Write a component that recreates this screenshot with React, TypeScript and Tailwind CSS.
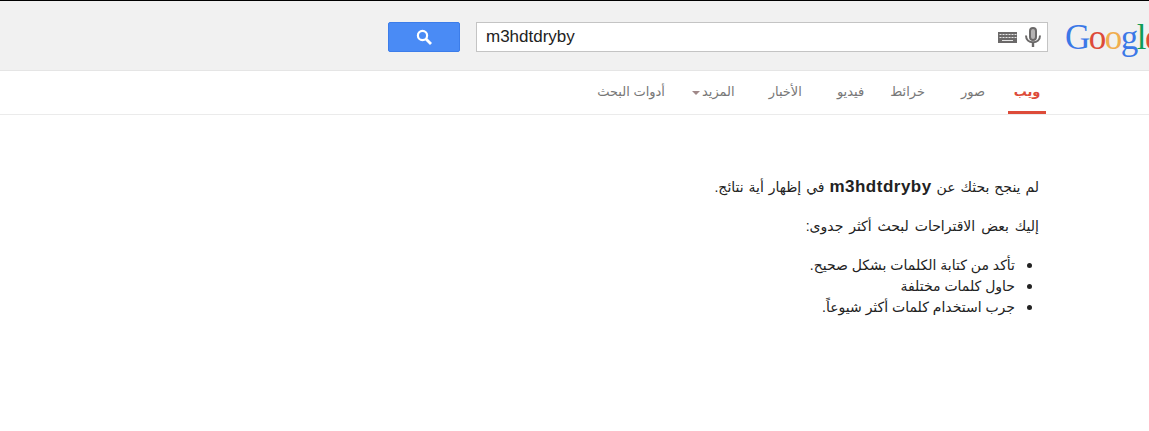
const tabs = [
  { label: "صور", cls: "mr-[23px]" },
  { label: "خرائط", cls: "mr-[36px]" },
  { label: "فيديو", cls: "mr-[26px]" },
  { label: "الأخبار", cls: "mr-[35px]" },
];

function SearchIcon() {
  return (
    <svg width="16" height="16" viewBox="0 0 16 16" fill="none" stroke="#fff">
      <circle cx="6.5" cy="6.5" r="4.6" strokeWidth="2.2" />
      <path d="M10 10l5 5" strokeWidth="2.8" />
    </svg>
  );
}

function KeyboardIcon() {
  return (
    <svg width="19" height="11" viewBox="0 0 19 11">
      <rect width="19" height="11" fill="#6b6969" />
      {[1, 2, 3, 4, 5, 6].map((i) => (
        <rect key={i} x={i * 3 - 1.5} y="2" width="2" height="1" fill="#e6e6e6" />
      ))}
      {[1, 2, 3, 4, 5, 6].map((i) => (
        <rect key={i} x={i * 3 - 1.5} y="5" width="2" height="1" fill="#e6e6e6" />
      ))}
      <rect x="4" y="8" width="11" height="1" fill="#e6e6e6" />
    </svg>
  );
}

function MicIcon() {
  return (
    <svg width="16" height="20" viewBox="0 0 16 20" fill="none" stroke="#6b6969">
      <rect x="5" y="1" width="6" height="12" rx="3" fill="#b5b3b3" strokeWidth="2" />
      <path d="M1 8.5c0 4.5 3 6.8 7 6.8s7-2.3 7-6.8" strokeWidth="2" />
      <path d="M8 15v5" strokeWidth="2.4" />
    </svg>
  );
}

function Header() {
  return (
    <header className="h-[71px] border-t border-b border-t-black border-b-[#e5e5e5] bg-[#f1f1f1] flex items-start pt-[21px] pl-[388px] overflow-hidden">
      <button className="w-[72px] h-[30px] shrink-0 rounded-xs border border-[#3c7dea] bg-[#4a8bf5] flex items-center justify-center">
        <SearchIcon />
      </button>
      <div className="ml-4 w-[572px] h-[30px] shrink-0 border border-[#c4c4c4] bg-white flex items-center pl-[9px] pr-[6px]">
        <span className="flex-1 text-[17px] text-[#222]">m3hdtdryby</span>
        <KeyboardIcon />
        <span className="ml-[8px] flex">
          <MicIcon />
        </span>
      </div>
      <div className="ml-[17px] -mt-[6px] shrink-0 font-['Liberation_Serif',serif] text-[35px] leading-[44px] tracking-[-1.5px]">
        <span className="text-[#3b78e7]">G</span>
        <span className="text-[#dd4b39]">o</span>
        <span className="text-[#f0ad4e]">o</span>
        <span className="text-[#3b78e7]">g</span>
        <span className="text-[#0f9d58]">l</span>
        <span className="text-[#dd4b39]">e</span>
      </div>
    </header>
  );
}

function Nav() {
  return (
    <nav dir="rtl" className="h-11 border-b border-[#ebebeb] flex items-start pr-[103px] text-[13px]">
      <div className="w-[38px] h-[43px] border-b-[3px] border-[#dd4b39] pt-[11px] text-center font-bold text-[#dd4b39]">
        ويب
      </div>
      {tabs.map((t) => (
        <div key={t.label} className={`${t.cls} pt-[11px] text-[#777]`}>
          {t.label}
        </div>
      ))}
      <div className="mr-[34px] pt-[11px] text-[#777] flex items-center">
        المزيد
        <span className="mr-[2px] mt-[2px] border-x-[4px] border-t-[4px] border-x-transparent border-t-[#a08888]" />
      </div>
      <div className="mr-[27px] pt-[11px] text-[#777]">أدوات البحث</div>
    </nav>
  );
}

export default function App() {
  return (
    <div className="h-[431px] bg-white overflow-hidden font-['Liberation_Sans','DejaVu_Sans',sans-serif]">
      <Header />
      <Nav />
      <main dir="rtl" className="pt-[62px] pr-[110px] text-[14px] leading-[20px] text-[#222]">
        <p className="[word-spacing:1px]">
          لم ينجح بحثك عن <b className="text-[17px] tracking-[0.5px]">m3hdtdryby</b> في إظهار أية نتائج.
        </p>
        <p className="mt-[19px] [word-spacing:2px]">إليك بعض الاقتراحات لبحث أكثر جدوى:</p>
        <ul className="mt-[18px] list-disc pr-[24px] leading-[20px] marker:text-[18px]">
          <li>تأكد من كتابة الكلمات بشكل صحيح.</li>
          <li>حاول كلمات مختلفة</li>
          <li>جرب استخدام كلمات أكثر شيوعاً.</li>
        </ul>
      </main>
    </div>
  );
}
